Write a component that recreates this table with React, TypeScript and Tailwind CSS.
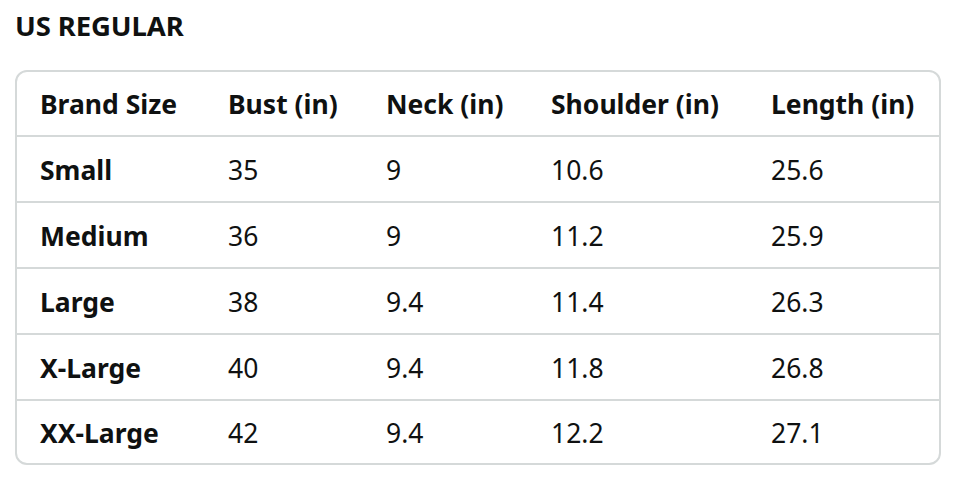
import React from "react";

const header = ["Brand Size", "Bust (in)", "Neck (in)", "Shoulder (in)", "Length (in)"];
const rows = [
  ["Small", "35", "9", "10.6", "25.6"],
  ["Medium", "36", "9", "11.2", "25.9"],
  ["Large", "38", "9.4", "11.4", "26.3"],
  ["X-Large", "40", "9.4", "11.8", "26.8"],
  ["XX-Large", "42", "9.4", "12.2", "27.1"],
];

const grid = "grid grid-cols-[188px_158px_165px_220px_1fr] items-center pl-[23px]";

export default function App() {
  return (
    <div
      className="w-[960px] h-[486px] bg-white text-[#0f1111] px-[15px] pt-[7px]"
      style={{ fontFamily: '"Noto Sans", "Open Sans", Arial, sans-serif' }}
    >
      <h1 className="text-[27.5px] font-bold leading-[38px] tracking-[-0.1px]">US REGULAR</h1>
      <div className="mt-[25px] w-[926px] border-2 border-[#d5d9d9] rounded-[12px] text-[26.5px]">
        <div className={`${grid} h-[65px] pt-[2px] border-b-2 border-[#d5d9d9] font-bold`}>
          {header.map((h) => (
            <div key={h}>{h}</div>
          ))}
        </div>
        {rows.map((r, i) => (
          <div
            key={r[0]}
            className={`${grid} pt-[3px] ${i < rows.length - 1 ? "h-[66px] border-b-2 border-[#d5d9d9]" : "h-[62px]"}`}
          >
            {r.map((c, j) => (
              <div key={j} className={j === 0 ? "font-bold" : ""}>
                {c}
              </div>
            ))}
          </div>
        ))}
      </div>
    </div>
  );
}
